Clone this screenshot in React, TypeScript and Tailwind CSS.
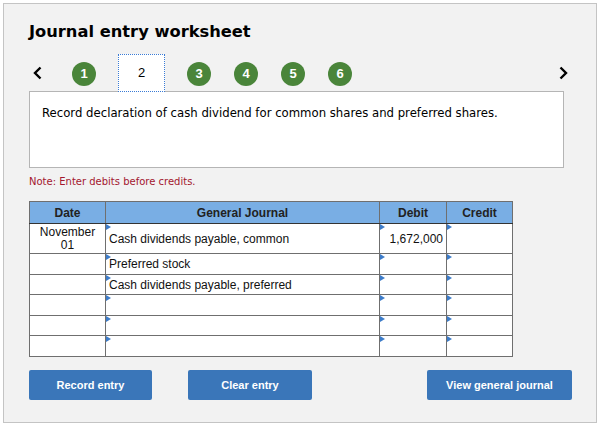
import React from "react";

const Tri = () => (
  <span className="absolute left-0 top-0 w-0 h-0 border-t-[3px] border-b-[3px] border-l-[5px] border-t-transparent border-b-transparent border-l-[#3d7cc9]" />
);

const Circle = ({ n }: { n: number }) => (
  <div className="w-[24px] h-[24px] rounded-full bg-[#4a853a] text-white flex items-center justify-center text-[13px] font-bold font-['Liberation_Sans',Arial,sans-serif]">
    {n}
  </div>
);

type Row = { date?: React.ReactNode; text?: string; debit?: string; h: string };

const rows: Row[] = [
  { date: (<>November<br />01</>), text: "Cash dividends payable, common", debit: "1,672,000", h: "h-[30px]" },
  { text: "Preferred stock", h: "h-[21px]" },
  { text: "Cash dividends payable, preferred", h: "h-[20px]" },
  { h: "h-[21px]" },
  { h: "h-[20px]" },
  { h: "h-[21px]" },
];

export default function App() {
  return (
    <div className="w-[598px] h-[434px] bg-white pt-[3px] pl-[3px]">
      <div className="w-[594px] h-[420px] bg-[#f2f2f2] border border-[#c4c4c4] pl-[25px] pt-[18px]">
        <h1 className="text-[16.3px] leading-[20px] font-bold text-black font-['DejaVu_Sans',Verdana,sans-serif]">
          Journal entry worksheet
        </h1>
        <div className="mt-[12px] h-[38px] w-[535px] flex items-center relative z-10">
          <svg className="ml-[4px] w-[9px] h-[14px]" viewBox="0 0 9 14">
            <path d="M7.5 1.5 L2 7 L7.5 12.5" fill="none" stroke="#000" strokeWidth="2.4" />
          </svg>
          <div className="ml-[30px] flex items-center gap-[23px] translate-y-[1px]">
            <Circle n={1} />
            <div className="w-[47px] h-[38px] -translate-y-[1px] bg-white border border-dotted border-[#3a7bd5] flex items-center justify-center text-[13px] text-black font-['Liberation_Sans',Arial,sans-serif] -mx-[1px]">
              2
            </div>
            <Circle n={3} />
            <Circle n={4} />
            <Circle n={5} />
            <Circle n={6} />
          </div>
          <svg className="ml-auto mr-[-4px] w-[9px] h-[14px]" viewBox="0 0 9 14">
            <path d="M1.5 1.5 L7 7 L1.5 12.5" fill="none" stroke="#000" strokeWidth="2.4" />
          </svg>
        </div>
        <div className="-mt-[1px] w-[535px] h-[77px] bg-white border border-[#b5b5b5] pl-[12px] pt-[14px] text-[11.7px] leading-[14px] text-black font-['DejaVu_Sans',Verdana,sans-serif]">
          Record declaration of cash dividend for common shares and preferred shares.
        </div>
        <p className="mt-[8px] text-[10px] leading-[12px] text-[#a3172e] font-['DejaVu_Sans',Verdana,sans-serif]">
          Note: Enter debits before credits.
        </p>
        <table className="mt-[13px] border-collapse text-[12px] text-[#111] font-['Liberation_Sans',Arial,sans-serif]">
          <thead>
            <tr className="h-[22px] bg-[#79aee4]">
              <th className="w-[76px] border border-[#6f6f6f] border-b-[#333] font-bold text-[#222] p-0">Date</th>
              <th className="w-[274px] border border-[#6f6f6f] border-b-[#333] font-bold text-[#222] p-0">General Journal</th>
              <th className="w-[67px] border border-[#6f6f6f] border-b-[#333] font-bold text-[#222] p-0">Debit</th>
              <th className="w-[66px] border border-[#6f6f6f] border-b-[#333] font-bold text-[#222] p-0">Credit</th>
            </tr>
          </thead>
          <tbody className="bg-white">
            {rows.map((r, i) => (
              <tr key={i} className={r.h}>
                <td className="border border-[#6f6f6f] text-center leading-[13px] p-0">{r.date}</td>
                <td className="relative border border-[#6f6f6f] px-[3px] py-0 leading-[14px]">
                  <Tri />
                  {r.text}
                </td>
                <td className="relative border border-[#6f6f6f] px-[3px] py-0 text-right leading-[14px]">
                  <Tri />
                  {r.debit}
                </td>
                <td className="relative border border-[#6f6f6f] px-[3px] py-0">
                  <Tri />
                </td>
              </tr>
            ))}
          </tbody>
        </table>
        <div className="mt-[13px] w-[543px] flex items-center text-white text-[11px] font-bold font-['Liberation_Sans',Arial,sans-serif]">
          <button className="w-[123px] h-[30px] rounded-[2px] bg-[#3a76b9]">Record entry</button>
          <button className="ml-[36px] w-[124px] h-[30px] rounded-[2px] bg-[#3a76b9]">Clear entry</button>
          <button className="ml-auto w-[145px] h-[30px] rounded-[2px] bg-[#3a76b9]">View general journal</button>
        </div>
      </div>
    </div>
  );
}
